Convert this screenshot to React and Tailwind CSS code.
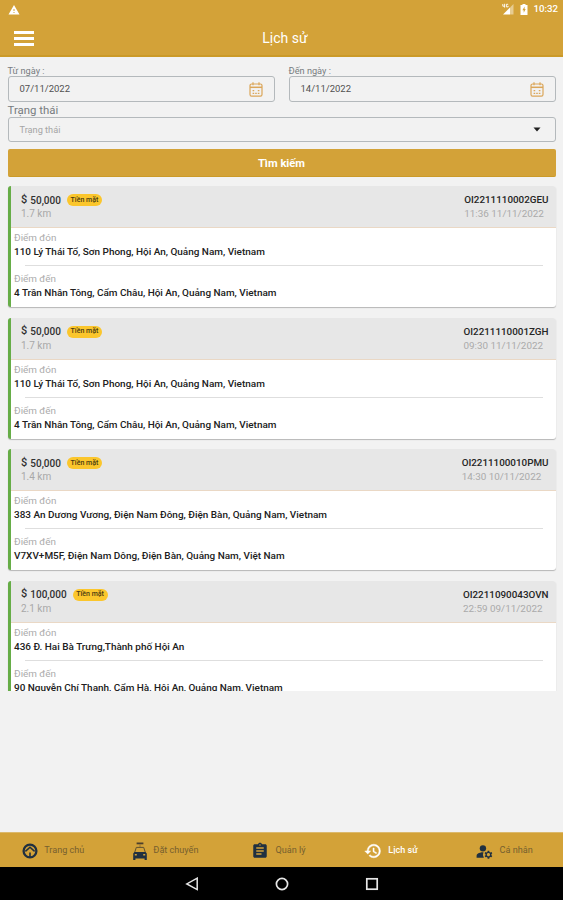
import { MdAssignment, MdManageAccounts, MdWarning } from 'react-icons/md';
import clsx from 'clsx';

const trips = [
  {
    code: 'OI2211110002GEU',
    price: '50,000',
    distance: '1.7 km',
    time: '11:36 11/11/2022',
    from: '110 Lý Thái Tổ, Sơn Phong, Hội An, Quảng Nam, Vietnam',
    to: '4 Trần Nhân Tông, Cẩm Châu, Hội An, Quảng Nam, Vietnam',
  },
  {
    code: 'OI2211110001ZGH',
    price: '50,000',
    distance: '1.7 km',
    time: '09:30 11/11/2022',
    from: '110 Lý Thái Tổ, Sơn Phong, Hội An, Quảng Nam, Vietnam',
    to: '4 Trần Nhân Tông, Cẩm Châu, Hội An, Quảng Nam, Vietnam',
  },
  {
    code: 'OI2211100010PMU',
    price: '50,000',
    distance: '1.4 km',
    time: '14:30 10/11/2022',
    from: '383 An Dương Vương, Điện Nam Đông, Điện Bàn, Quảng Nam, Vietnam',
    to: 'V7XV+M5F, Điện Nam Dông, Điện Bàn, Quảng Nam, Việt Nam',
  },
  {
    code: 'OI2211090043OVN',
    price: '100,000',
    distance: '2.1 km',
    time: '22:59 09/11/2022',
    from: '436 Đ. Hai Bà Trưng,Thành phố Hội An',
    to: '90 Nguyễn Chí Thanh, Cẩm Hà, Hội An, Quảng Nam, Vietnam',
  },
];

function CalendarIcon() {
  return (
    <svg width="14" height="15" viewBox="0 0 14 15" fill="none" stroke="#dba659" strokeWidth="1.2">
      <rect x="1" y="2" width="12" height="12.2" rx="1.6" />
      <path d="M1 5.3h12" strokeWidth="1.5" />
      <path d="M4 0.2v3M10 0.2v3" />
      <path d="M3.6 8.6h1.6M8.8 8.6h1.6M3.6 11.4h1.6M6.2 11.4h1.6M8.8 11.4h1.6" />
    </svg>
  );
}

function HomeIcon() {
  return (
    <svg width="16" height="16" viewBox="0 0 16 16">
      <circle cx="8" cy="8" r="6.4" fill="none" stroke="#203040" strokeWidth="2.3" />
      <path d="M3.4 8.4 8 4.2l4.6 4.2" fill="none" stroke="#203040" strokeWidth="1.5" />
      <path d="M7.2 9.4h1.6V14H7.2z" fill="#203040" />
    </svg>
  );
}

function TaxiIcon() {
  return (
    <svg width="14" height="18" viewBox="0 0 14 18">
      <path d="M3.6 0.5h6.8v1.8H3.6z" fill="#4b3f2c" />
      <path d="M6.5 2.3h1v3h-1z" fill="#9a7530" />
      <path d="M3.3 5.4h7.4l1.7 5.2H1.6z" fill="none" stroke="#5f5130" strokeWidth="1" />
      <path
        fillRule="evenodd"
        fill="#203040"
        d="M1.5 10h11l1.3 1.6V18h-2.2v-1.5H2.4V18H0.2v-6.4zM1.8 12v1.4h2V12zm8.4 0v1.4h2V12z"
      />
    </svg>
  );
}

function HistoryIcon() {
  return (
    <svg width="18" height="18" viewBox="0 0 24 24" fill="#fff" stroke="#fff" strokeWidth="0.6">
      <path d="M13 3a9 9 0 0 0-9 9H1l3.89 3.89.07.14L9 12H6c0-3.87 3.13-7 7-7s7 3.13 7 7-3.13 7-7 7c-1.93 0-3.68-.79-4.94-2.06l-1.42 1.42A8.954 8.954 0 0 0 13 21a9 9 0 0 0 0-18zm-1 5v5l4.28 2.54.72-1.21-3.5-2.08V8H12z" />
    </svg>
  );
}

function DateField({ label, value }) {
  return (
    <div className="flex-1">
      <div className="h-[10px] text-[9.2px] leading-[10px] text-[#777c80]">{label}</div>
      <div className="flex h-[26px] items-center justify-between rounded-[3px] border border-[#b4b9bc] pl-[11px] pr-[11px] text-[9.5px] text-[#505050]">
        <span>{value}</span>
        <CalendarIcon />
      </div>
    </div>
  );
}

function Place({ label, address }) {
  return (
    <div className="pl-[3.5px]">
      <div className="h-[13px] text-[9.9px] leading-[12px] text-[#ababab]">{label}</div>
      <div className="h-[14px] whitespace-nowrap text-[9.96px] font-medium leading-[14px] text-[#202020]">{address}</div>
    </div>
  );
}

function TripCard({ trip }) {
  return (
    <div className="h-[121px] shrink-0 overflow-hidden rounded-[3px] border-l-[3px] border-[#66ad47] bg-white shadow-[0_1px_1px_rgba(0,0,0,0.25)]">
      <div className="flex h-[42px] justify-between border-b border-[#ead8c5] bg-[#e7e7e7] pl-[10.5px] pr-[7px] pt-[7px]">
        <div>
          <div className="flex h-[14px] items-center text-[10px] font-medium text-[#303030]">
            <span className="mr-[3px] text-[11px]">$</span>
            <span>{trip.price}</span>
            <span className="ml-[6px] flex h-[12px] w-[35px] items-center justify-center rounded-full bg-[#fbc62c] text-[7px] text-[#4a3a12]">
              Tiền mặt
            </span>
          </div>
          <div className="text-[10px] leading-[13px] text-[#a8a8a8]">{trip.distance}</div>
        </div>
        <div className="text-left">
          <div className="h-[14px] text-[9.85px] font-medium leading-[14px] text-[#252525]">{trip.code}</div>
          <div className="text-[9.9px] leading-[13px] text-[#aaaaaa]">{trip.time}</div>
        </div>
      </div>
      <div className="pt-[4px]">
        <Place label="Điểm đón" address={trip.from} />
        <div className="mb-[7px] ml-[14px] mr-[13px] mt-[6px] h-px bg-[#dedede]" />
        <Place label="Điểm đến" address={trip.to} />
      </div>
    </div>
  );
}

function Tab({ icon, label, active }) {
  return (
    <div
      className={clsx(
        'flex flex-1 items-center justify-center gap-[6px] pr-[6px] pt-[2px] text-[9.1px]',
        active ? 'font-medium text-white' : 'text-[#76602f]'
      )}
    >
      {icon}
      <span>{label}</span>
    </div>
  );
}

export default function App() {
  return (
    <div className="flex h-[900px] w-[563px] flex-col overflow-hidden bg-[#f2f2f2] font-['Roboto','Noto_Sans',sans-serif]">
      {/* Status bar + title */}
      <header className="h-[57px] shrink-0 border-b-2 border-[#cb9a28] bg-[#d3a238] text-white">
        <div className="flex h-[19px] items-center justify-between pl-[8px] pr-[5px]">
          <MdWarning size={12} />
          <div className="flex items-center">
            <svg width="12" height="12" viewBox="0 0 12 12">
              <path d="M11.5 1v10.5H8V4.5z" fill="#fff" opacity="0.45" />
              <path d="M8 4.5v7H1z" fill="#fff" />
              <path d="M0.8 1v2.2h2M2.6 0.8v3.8M6.2 1.3H4.4v2.6h1.7V2.8" fill="none" stroke="#fff" strokeWidth="0.9" />
            </svg>
            <svg className="ml-[6px]" width="8" height="11" viewBox="0 0 8 11">
              <path d="M2.5 0h3v1H7.5v10h-7V1h2z" fill="#fff" />
              <path d="M4.6 2.5 2.4 6.3h1.3v2.5l2-3.7H4.6z" fill="#d3a238" />
            </svg>
            <span className="ml-[5px] text-[9.7px] font-medium">10:32</span>
          </div>
        </div>
        <div className="grid h-[38px] grid-cols-3 items-center">
          <div className="ml-[14px] flex w-[20px] flex-col gap-[3px]">
            <span className="h-[3px] bg-white" />
            <span className="h-[3px] bg-white" />
            <span className="h-[3px] bg-white" />
          </div>
          <h1 className="pl-[7px] text-center text-[14px]">Lịch sử</h1>
        </div>
      </header>

      {/* Filters */}
      <section className="shrink-0 px-[7.5px] pt-[9px]">
        <div className="flex gap-[14px]">
          <DateField label="Từ ngày :" value="07/11/2022" />
          <DateField label="Đến ngày :" value="14/11/2022" />
        </div>
        <div className="h-[15px] text-[11.4px] leading-[16px] text-[#777c80]">Trạng thái</div>
        <div className="flex h-[25px] items-center justify-between rounded-[3px] border border-[#b4b9bc] pl-[11px] pr-[14px] text-[9.2px] text-[#a5a5a5]">
          <span>Trạng thái</span>
          <svg width="8" height="5" viewBox="0 0 8 5">
            <path d="M0.5 0.5h7L4 4.5z" fill="#202020" />
          </svg>
        </div>
        <button className="mt-[7px] block h-[28px] w-full rounded-[2px] border-b border-[#cb9a28] bg-[#d3a238] pt-[2px] text-[11.2px] font-bold leading-none text-white">
          Tìm kiếm
        </button>
      </section>

      {/* Trip list, last card is cut by the scroll area */}
      <main className="mt-[9px] flex h-[505px] shrink-0 flex-col gap-[10.5px] overflow-hidden px-[7.5px]">
        {trips.map((trip) => (
          <TripCard key={trip.code} trip={trip} />
        ))}
      </main>

      <nav className="mt-auto flex h-[35px] shrink-0 border-t border-[#dcb96c] bg-[#d3a238]">
        <Tab icon={<HomeIcon />} label="Trang chủ" />
        <Tab icon={<TaxiIcon />} label="Đặt chuyến" />
        <Tab icon={<MdAssignment size={18} color="#203040" />} label="Quản lý" />
        <Tab icon={<HistoryIcon />} label="Lịch sử" active />
        <Tab icon={<MdManageAccounts size={19} color="#203040" />} label="Cá nhân" />
      </nav>

      {/* Android buttons */}
      <footer className="flex h-[33px] shrink-0 items-center justify-center gap-[76px] bg-black">
        <svg width="14" height="14" viewBox="0 0 14 14" fill="none" stroke="#e6e6e6" strokeWidth="1.5">
          <path d="M12.2 1.2v11.4L1.8 6.9z" />
        </svg>
        <svg width="14" height="14" viewBox="0 0 14 14" fill="none" stroke="#e6e6e6" strokeWidth="1.7">
          <circle cx="7" cy="7" r="5.6" />
        </svg>
        <svg width="14" height="14" viewBox="0 0 14 14" fill="none" stroke="#e6e6e6" strokeWidth="1.7">
          <rect x="1.8" y="1.8" width="10.4" height="10.4" />
        </svg>
      </footer>
    </div>
  );
}
